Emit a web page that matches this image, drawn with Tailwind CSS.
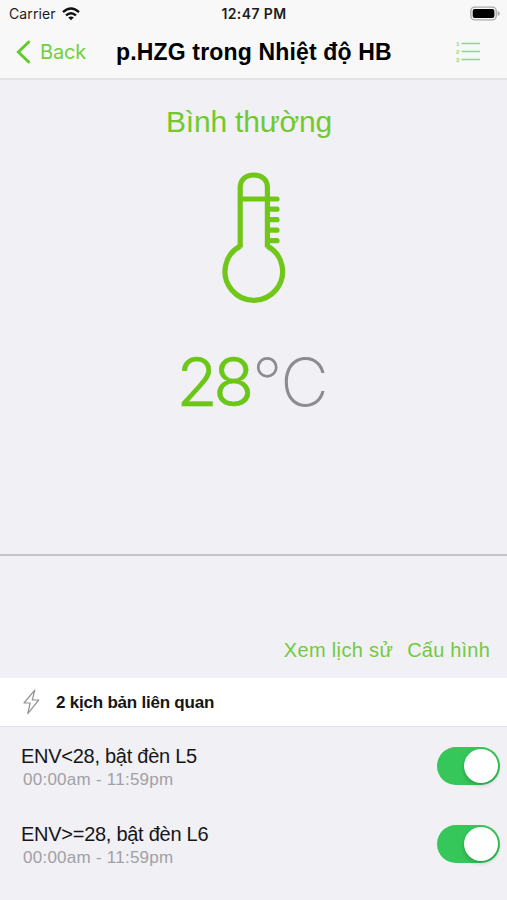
<!DOCTYPE html>
<html lang="vi">
<head>
<meta charset="utf-8">
<title>Nhiệt độ</title>
<script src="https://cdn.jsdelivr.net/npm/@tailwindcss/browser@4"></script>
</head>
<body class="w-[507px] h-[900px] overflow-hidden bg-[#f0f0f5] font-['Liberation_Sans',Arial,sans-serif] text-black flex flex-col whitespace-nowrap">
  <header class="h-20 shrink-0 bg-[#f8f8f8] border-b-2 border-[#e4e4e7]">
    <div class="h-[27px] grid grid-cols-3 items-center pl-[9px] pr-[7px] font-['Inter',sans-serif] text-[14px] text-[#1c1c1c]">
      <div class="flex items-center gap-[6px]">
        <span class="tracking-[0.1px]">Carrier</span>
        <svg width="18" height="14" viewBox="0 0 18 14" fill="none" stroke="#111" stroke-width="2.4"><path d="M1 5.2Q9-2 17 5.2M4 8.4Q9 4 14 8.4"/><path d="M9 13.3L6.2 10.5Q9 8.3 11.8 10.5Z" fill="#111" stroke="none"/></svg>
      </div>
      <span class="text-center font-semibold tracking-[0.4px] mr-[1px]">12:47 PM</span>
      <svg class="justify-self-end" width="30" height="15" viewBox="0 0 31 15"><rect x=".9" y=".9" width="26.2" height="13.2" rx="4" fill="#f8f8f8" stroke="#aaa" stroke-width="1.4"/><rect x="2.8" y="2.8" width="22.4" height="9.4" rx="2" fill="#000"/><path d="M28.5 5Q30.8 5.8 30.8 7.5T28.5 10Z" fill="#aaa"/></svg>
    </div>
    <div class="h-[49px] flex items-center pl-4 pr-[26px]">
      <svg width="15" height="24" viewBox="0 0 15 24" fill="none" stroke="#60cb25" stroke-width="2.8"><path d="M13.5 1.3L2.3 12L13.5 22.7"/></svg>
      <span class="ml-[9px] w-[76px] pt-[1px] font-['Inter',sans-serif] text-[20px] tracking-[-0.2px] text-[#72cf3d]">Back</span>
      <h1 class="pt-[2px] text-[23px] font-bold leading-none tracking-[0.16px]">p.HZG trong Nhiệt độ HB</h1>
      <svg class="ml-auto" width="25" height="23" viewBox="0 0 25 23" fill="none" stroke="#90dc68"><path d="M5.5 3.5H24M5.5 11.5H24M5.5 19.5H24" stroke-width="1.4"/><g fill="#90dc68" stroke="none" class="font-['Liberation_Sans',sans-serif] text-[6px] font-bold"><text x="0" y="5.5">1</text><text x="0" y="13.5">2</text><text x="0" y="21.5">3</text></g></svg>
    </div>
  </header>
  <main class="flex flex-col flex-1">
    <section class="h-[476px] shrink-0 border-b-2 border-[#c4c4c8] flex flex-col items-center">
      <h2 class="mt-[24px] ml-[-9px] h-9 leading-9 text-[30px] tracking-[-0.2px] text-[#72c92d]">Bình thường</h2>
      <svg class="mt-[32px]" width="64" height="132" viewBox="0 0 64 132" fill="none" stroke="#70c719" stroke-width="5.2"><path d="M45.4 75.6V15.5C45.4 8 40 3 31.8 3S18.2 8 18.2 15.5V75.6"/><path d="M18.2 74.1A28.8 28.8 0 1 0 45.4 74.1"/><path d="M19 27H55M46 37.2H55M46 47.7H55M46 58.2H55M46 68.7H55" stroke-linecap="round"/></svg>
      <div class="mt-[36px] mr-[3px] h-[84px] leading-[84px] flex font-['Inter',sans-serif] text-[67px]">
        <span class="font-light text-[#6bc618] tracking-[-4.3px] [-webkit-text-stroke:0.5px_#6bc618]">28</span><span class="ml-[2px] font-extralight text-[#8b8b90] tracking-[-1.3px]">°C</span>
      </div>
    </section>
    <nav class="h-[122px] shrink-0 flex items-end justify-end gap-[14px] pr-[17px] pb-[16px] text-[20px] leading-6 tracking-[0.2px] text-[#71cb3d]"><span class="tracking-[0.35px]">Xem lịch sử</span><span>Cấu hình</span></nav>
    <div class="h-[49px] shrink-0 bg-white border-b border-[#e2e2e6] flex items-center pl-[23px]">
      <svg width="17" height="26" viewBox="0 0 17 26" fill="none" stroke="#929292" stroke-width="1.2" stroke-linejoin="round"><path d="M11.8 1.2L1 14H7.2L4.8 24.6L15.7 11H9.3Z"/></svg>
      <h3 class="ml-4 pt-[2px] text-[17px] font-bold tracking-[-0.22px] text-[#161616]">2 kịch bản liên quan</h3>
    </div>
    <ul>
      <li class="h-[78px] flex items-center justify-between pl-[21px] pr-[7px]">
        <div class="pt-[3px]"><p class="text-[20px] leading-6 tracking-[-0.27px] text-[#161618]">ENV&lt;28, bật đèn L5</p><p class="pl-[2px] text-[17px] leading-6 tracking-[0.25px] text-[#a0a0a5]">00:00am - 11:59pm</p></div>
        <span class="w-[63px] h-[38px] rounded-full bg-[#35c759] p-[2px] flex justify-end"><span class="size-[34px] rounded-full bg-white shadow-[0_2px_4px_rgba(0,0,0,.22)]"></span></span>
      </li>
      <li class="h-[78px] flex items-center justify-between pl-[21px] pr-[7px]">
        <div class="pt-[3px]"><p class="text-[20px] leading-6 tracking-[-0.27px] text-[#161618]">ENV&gt;=28, bật đèn L6</p><p class="pl-[2px] text-[17px] leading-6 tracking-[0.25px] text-[#a0a0a5]">00:00am - 11:59pm</p></div>
        <span class="w-[63px] h-[38px] rounded-full bg-[#35c759] p-[2px] flex justify-end"><span class="size-[34px] rounded-full bg-white shadow-[0_2px_4px_rgba(0,0,0,.22)]"></span></span>
      </li>
    </ul>
  </main>
</body>
</html>
